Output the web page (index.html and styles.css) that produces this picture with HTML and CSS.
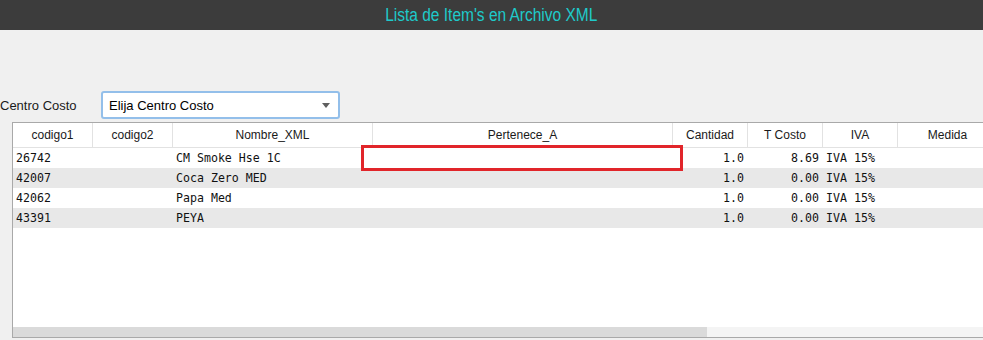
FILE: index.html
```html
<!DOCTYPE html>
<html lang="es">
<head>
    <meta charset="UTF-8">
    <title>Lista de Item's en Archivo XML</title>
    <link rel="stylesheet" href="styles.css">
</head>
<body>
    <div class="titlebar">
        <span class="title">Lista de Item's en Archivo XML</span>
    </div>

    <div class="toolbar">
        <label class="label">Centro Costo</label>
        <div class="combo">
            <span>Elija Centro Costo</span>
            <span class="arrow"></span>
        </div>
    </div>

    <div class="grid">
        <div class="row head">
            <div class="cell">codigo1</div>
            <div class="cell">codigo2</div>
            <div class="cell">Nombre_XML</div>
            <div class="cell">Pertenece_A</div>
            <div class="cell">Cantidad</div>
            <div class="cell">T Costo</div>
            <div class="cell">IVA</div>
            <div class="cell">Medida</div>
        </div>

        <div class="row data">
            <div class="cell">26742</div>
            <div class="cell"></div>
            <div class="cell">CM Smoke Hse 1C</div>
            <div class="cell"></div>
            <div class="cell num">1.0</div>
            <div class="cell num">8.69</div>
            <div class="cell">IVA 15%</div>
            <div class="cell"></div>
        </div>
        <div class="row data alt">
            <div class="cell">42007</div>
            <div class="cell"></div>
            <div class="cell">Coca Zero MED</div>
            <div class="cell"></div>
            <div class="cell num">1.0</div>
            <div class="cell num">0.00</div>
            <div class="cell">IVA 15%</div>
            <div class="cell"></div>
        </div>
        <div class="row data">
            <div class="cell">42062</div>
            <div class="cell"></div>
            <div class="cell">Papa Med</div>
            <div class="cell"></div>
            <div class="cell num">1.0</div>
            <div class="cell num">0.00</div>
            <div class="cell">IVA 15%</div>
            <div class="cell"></div>
        </div>
        <div class="row data alt">
            <div class="cell">43391</div>
            <div class="cell"></div>
            <div class="cell">PEYA</div>
            <div class="cell"></div>
            <div class="cell num">1.0</div>
            <div class="cell num">0.00</div>
            <div class="cell">IVA 15%</div>
            <div class="cell"></div>
        </div>

        <div class="fill"></div>

        <div class="hscroll">
            <div class="thumb"></div>
        </div>

        <!-- celda en edicion -->
        <div class="editor"></div>
    </div>
</body>
</html>
```

FILE: styles.css
```css
* {
    margin: 0;
    padding: 0;
    box-sizing: border-box;
}

body {
    width: 983px;
    height: 340px;
    overflow: hidden;
    background: #f0f0f0;
    font-family: 'Liberation Sans', Arial, sans-serif;
    color: #1a1a1a;
}

.titlebar {
    height: 30px;
    background: #3c3c3c;
    display: flex;
    justify-content: center;
    align-items: center;
}

.title {
    display: inline-block;
    color: #1ecaca;
    font-size: 18px;
    transform: scaleX(0.86);
    white-space: nowrap;
}

.toolbar {
    margin-top: 61px;
    height: 28px;
    display: flex;
    align-items: center;
}

.label {
    width: 101px;
    font-size: 13px;
}

.combo {
    width: 239px;
    height: 28px;
    border: 2px solid #93bfea;
    border-radius: 3px;
    background: #fff;
    display: flex;
    align-items: center;
    justify-content: space-between;
    padding: 0 8px 0 6px;
    font-size: 13px;
    color: #000;
}

.arrow {
    width: 0;
    height: 0;
    border-left: 4px solid transparent;
    border-right: 4px solid transparent;
    border-top: 5px solid #5f5f5f;
    margin-top: 1px;
}

.grid {
    position: relative;
    margin: 3px 0 0 12px;
    height: 216px;
    border: 1px solid #a9a9a9;
    border-right: none;
    background: #fff;
    display: flex;
    flex-direction: column;
    overflow: hidden;
}

.row {
    display: grid;
    grid-template-columns: 80px 80px 200px 300px 75px 75px 75px 100px;
    flex: none;
}

.head {
    height: 25px;
    border-bottom: 1px solid #e2e2e2;
    font-size: 12px;
}

.head .cell {
    border-right: 1px solid #e2e2e2;
    text-align: center;
    line-height: 24px;
}

.data {
    height: 20px;
    font-family: 'DejaVu Sans Mono', monospace;
    font-size: 11.6px;
    line-height: 20px;
    color: #111;
}

.data .cell {
    padding: 0 3px;
    white-space: nowrap;
}

.data .num {
    text-align: right;
    padding-right: 4px;
}

.alt {
    background: #e8e8e8;
}

.fill {
    flex: 1;
}

.hscroll {
    height: 10px;
    background: #f4f4f4;
    flex: none;
}

.thumb {
    width: 694px;
    height: 10px;
    background: #dadada;
}

.editor {
    position: absolute;
    left: 348px;
    top: 22px;
    width: 322px;
    height: 26px;
    border: 3px solid #e1252a;
    background: #fff;
}
```
